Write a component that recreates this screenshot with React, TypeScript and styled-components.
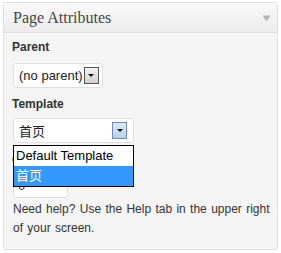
import React from 'react';
import { createGlobalStyle, styled } from 'styled-components';

const GlobalStyle = createGlobalStyle`
  body {
    margin: 0;
    background: #fff;
    font-family: Arial, 'Liberation Sans', 'Noto Sans CJK SC', sans-serif;
  }
`;

const Panel = styled.div`
  margin: 2px 0 0 3px;
  width: 275px;
  height: 248px;
  box-sizing: border-box;
  border: 1px solid #dfdfdf;
  border-radius: 3px;
  background: #f5f5f5;
  overflow: hidden;
`;

const Header = styled.div`
  height: 29px;
  display: flex;
  align-items: center;
  justify-content: space-between;
  padding: 0 6px 0 9px;
  background: linear-gradient(to bottom, #f9f9f9, #ececec);
  border-bottom: 1px solid #dfdfdf;
`;

const Title = styled.h3`
  margin: 0;
  font-family: 'Liberation Serif', Georgia, serif;
  font-weight: normal;
  font-size: 16px;
  color: #464646;
`;

const Body = styled.div`
  padding: 6px 6px 0 8px;
`;

const Label = styled.div`
  font-weight: bold;
  font-size: 12px;
  color: #333;
  line-height: 16px;
`;

const Field = styled.div<{ $mt: number; $mb: number; $relative?: boolean }>`
  position: ${p => (p.$relative ? 'relative' : 'static')};
  margin: ${p => p.$mt}px 0 ${p => p.$mb}px 1px;
`;

const SelectBox = styled.div<{ $width: number }>`
  width: ${p => p.$width}px;
  height: 25px;
  box-sizing: border-box;
  border: 1px solid #dfdfdf;
  border-radius: 3px;
  background: #fff;
  display: flex;
  align-items: center;
  padding-left: 5px;
  font-size: 13px;
  color: #222;
`;

const DropButton = styled.span<{ $focus?: boolean }>`
  width: 13px;
  height: 15px;
  border: 1px solid ${p => (p.$focus ? '#6d8fb5' : '#555')};
  background: ${p => (p.$focus ? 'linear-gradient(#dbe9f8, #b8d1ee)' : 'linear-gradient(#f4f4f4, #cfcfcf)')};
  display: flex;
  align-items: center;
  justify-content: center;
  margin-left: ${p => (p.$focus ? 'auto' : '1px')};
  margin-right: ${p => (p.$focus ? '6px' : '0')};
  &::after {
    content: '';
    border-left: 3px solid transparent;
    border-right: 3px solid transparent;
    border-top: 3px solid #111;
  }
`;

const List = styled.ul`
  position: absolute;
  left: 0;
  top: 27px;
  width: 121px;
  margin: 0;
  padding: 0;
  list-style: none;
  box-sizing: border-box;
  border: 1px solid #000;
  background: #fff;
  z-index: 2;
`;

const Option = styled.li<{ $active?: boolean }>`
  height: 20px;
  line-height: 20px;
  padding-left: 2px;
  font-size: 13px;
  color: ${p => (p.$active ? '#fff' : '#000')};
  background: ${p => (p.$active ? '#3399ff' : '#fff')};
`;

const NumberInput = styled.div`
  width: 55px;
  height: 24px;
  box-sizing: border-box;
  border: 1px solid #dfdfdf;
  border-radius: 3px;
  background: #fff;
  padding: 3px 0 0 4px;
  font-size: 13px;
  color: #333;
`;

const Help = styled.p`
  margin: 2px 0 0 1px;
  font-size: 12px;
  word-spacing: 1px;
  line-height: 19px;
  color: #333;
`;

const Arrow = () => (
  <svg width="9" height="8" viewBox="0 0 9 8">
    <path d="M0.5 1.5 L8.5 1.5 L4.5 7.5 Z" fill="#b4b4b4" />
  </svg>
);

export default function App() {
  return (
    <>
      <GlobalStyle />
      <Panel>
        <Header>
          <Title>Page Attributes</Title>
          <Arrow />
        </Header>
        <Body>
          <Label>Parent</Label>
          <Field $mt={8} $mb={8}>
            <SelectBox $width={90}>
              (no parent)
              <DropButton />
            </SelectBox>
          </Field>
          <Label>Template</Label>
          <Field $mt={6} $mb={9} $relative>
            <SelectBox $width={121}>
              首页
              <DropButton $focus />
            </SelectBox>
            <List>
              <Option>Default Template</Option>
              <Option $active>首页</Option>
            </List>
          </Field>
          <Label>Order</Label>
          <Field $mt={6} $mb={0}>
            <NumberInput>0</NumberInput>
          </Field>
          <Help>Need help? Use the Help tab in the upper right of your screen.</Help>
        </Body>
      </Panel>
    </>
  );
}
